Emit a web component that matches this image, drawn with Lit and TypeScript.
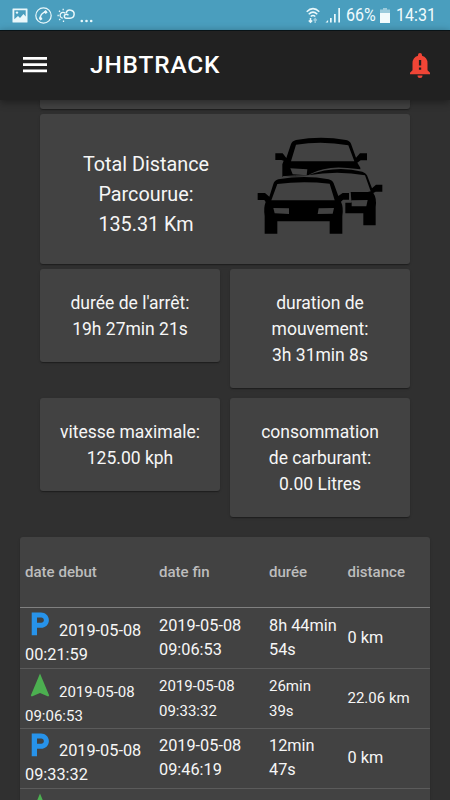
import { LitElement, html, css, svg } from "lit";
import { customElement } from "lit/decorators.js";
import { classMap } from "lit/directives/class-map.js";

interface Trip {
  kind: "parked" | "moving";
  startDay: string;
  startTime: string;
  endDay: string;
  endTime: string;
  duration: [string, string];
  distance: string;
}

const trips: Trip[] = [
  { kind: "parked", startDay: "2019-05-08", startTime: "00:21:59", endDay: "2019-05-08", endTime: "09:06:53", duration: ["8h 44min", "54s"], distance: "0 km" },
  { kind: "moving", startDay: "2019-05-08", startTime: "09:06:53", endDay: "2019-05-08", endTime: "09:33:32", duration: ["26min", "39s"], distance: "22.06 km" },
  { kind: "parked", startDay: "2019-05-08", startTime: "09:33:32", endDay: "2019-05-08", endTime: "09:46:19", duration: ["12min", "47s"], distance: "0 km" },
  { kind: "moving", startDay: "", startTime: "", endDay: "", endTime: "", duration: ["", ""], distance: "" },
];

const stats: string[][] = [
  ["durée de l'arrêt:", "19h 27min 21s"],
  ["duration de", "mouvement:", "3h 31min 8s"],
  ["vitesse maximale:", "125.00 kph"],
  ["consommation", "de carburant:", "0.00 Litres"],
];

const parkedShape = svg`<path fill="#2793ea" transform="translate(-5.200 -3.300) scale(1.320 1.270)" d="M13 3H6v18h4v-6h3c3.310 0 6-2.690 6-6s-2.690-6-6-6zm.2 8H10V7h3.200c1.100 0 2 .9 2 2s-.9 2-2 2z"/>`;
const movingShape = svg`<path fill="#4caf50" d="M11 .5L20.200 22.500L19.200 23.500L11 20L2.800 23.500L1.800 22.500z"/>`;

@customElement("app-root")
export class AppRoot extends LitElement {
  static styles = css`
    :host { display: block; width: 450px; height: 800px; overflow: hidden; background: #303030; color: #f6f6f6; font-family: Roboto, "Noto Sans", sans-serif; }
    * { box-sizing: border-box; }
    svg { display: block; flex: none; }
    .status { height: 30px; background: #4a9ebe; display: flex; align-items: center; padding: 0 14px 0 12px; color: #f0fbfd; }
    .status .pic { margin-right: 7px; }
    .status .phone { margin-right: 5px; }
    .status .dots { margin-left: 5px; }
    .status .grow { flex: 1; }
    .status .signal { margin: 0 5px 0 5px; }
    .status .battery { margin: 0 6px 0 4px; }
    .status span { font-size: 18px; line-height: 30px; white-space: nowrap; }
    .status .pct { width: 30px; }
    .status .clock { width: 40px; }
    .squeeze { display: block; transform-origin: left; transform: scaleX(0.89); }
    .appbar { position: relative; height: 70px; background: #212121; border-top: 1px solid #091317; display: flex; align-items: center; padding: 0 20px 1px 23px; box-shadow: 0 2px 8px rgba(0, 0, 0, 0.42); }
    .title { flex: 1; margin-left: 43px; font-size: 24.400px; font-weight: 500; letter-spacing: 0.850px; line-height: 30px; color: #fff; }
    .card { background: #424242; border-radius: 3px; box-shadow: 0 2px 1px -1px rgba(0,0,0,.2), 0 1px 1px rgba(0,0,0,.14), 0 1px 3px rgba(0,0,0,.12); }
    .content { padding: 0 40px; }
    .previous { height: 9.400px; border-radius: 0 0 3px 3px; }
    .total { margin-top: 5px; height: 150px; display: flex; align-items: center; padding: 0 26px 0 26px; justify-content: space-between; }
    .total p { margin: 11.500px 0 0; width: 160px; text-align: center; font-size: 19.800px; line-height: 30px; }
    .total svg { margin-bottom: 6px; }
    .stats { margin-top: 5px; display: grid; grid-template-columns: 180px 180px; column-gap: 10px; row-gap: 10px; align-items: start; }
    .stat { padding: 20.500px 0 20px; text-align: center; font-size: 17.500px; line-height: 26.100px; }
    .line { display: block; white-space: nowrap; }
    .table { margin: 20.200px 20px 0; }
    .row { display: grid; grid-template-columns: 134px 110px 78.500px 1fr; padding-left: 5px; height: 60.250px; align-items: center; border-bottom: 1px solid #5b5b5b; font-size: 16.300px; line-height: 24.200px; white-space: nowrap; }
    .row.moving { font-size: 15px; }
    .head { height: 71px; border-color: #808080; color: #bdbdbd; font-size: 15.050px; font-weight: 500; }
    .start { display: grid; grid-template-columns: 34px 1fr; align-self: start; }
    .start .icon { padding: 4px 0 0 4px; height: 34.500px; }
    .day { padding-top: 10.500px; }
    .time { grid-column: 1 / 3; }
    .row:nth-child(2) { height: 61px; }
    .row:nth-child(2) .day { padding-top: 11px; }
    .row:nth-child(3) { height: 59.500px; }
  `;

  private statusBar() {
    return html`<div class="status">
      <svg class="pic" width="16" height="15" viewBox="0 0 16 15"><path fill="#e9f8fb" fill-rule="evenodd" d="M1 .5h14q.5 0 .5.500v13q0 .5-.5.500H1q-.5 0-.5-.5V1Q.5.500 1 .5zM2.300 2.200v9L6 8l2 2 3.500-4 2.200 2.500V2.200z"/><circle cx="5" cy="4.600" r="1.200" fill="#e9f8fb"/></svg>
      <svg class="phone" width="17" height="17" viewBox="0 0 17 17" fill="none" stroke="#e9f8fb"><circle cx="8.500" cy="8.500" r="7.700" stroke-width="1.200"/><path stroke-width="1.500" d="M5.300 12.500C4.800 8.800 7 5.500 11.500 4.700"/><path stroke-width="2.600" d="M4.800 10.300l1.700 2.500M9.800 3.800l1.800 2.400"/></svg>
      <svg width="18" height="15" viewBox="0 0 18 15" fill="none" stroke="#e9f8fb" stroke-width="1.300"><path d="M5.800 10.200A2.900 2.900 0 1 1 8.200 5.400"/><path d="M.5 7.500h1.300M2 2.700l1 1M6.200 .8v1.500M2.200 12l1-1M6.500 12.500V14"/><path stroke-width="1.500" d="M11.500 7.200Q9.300 5.300 7.600 7q-1 3 2 3.300h3.500a4.100 4.100 0 1 0-4-5.300"/></svg>
      <svg class="dots" width="14" height="17" viewBox="0 0 14 17" fill="#e9f8fb"><circle cx="1.800" cy="14" r="1.300"/><circle cx="6.500" cy="14" r="1.300"/><circle cx="11.200" cy="14" r="1.300"/></svg>
      <div class="grow"></div>
      <svg width="14" height="17" viewBox="0 0 14 17" fill="none" stroke="#e9f8fb" stroke-width="1.500"><path d="M.7 4.700Q7-1.500 13.300 4.700M2.700 7.200Q7 3 11.300 7.200M4.700 9.500Q7 7.400 9.300 9.500"/><path d="M4.500 11v4M2.800 13.400l1.700 1.800 1.700-1.800"/><path opacity=".5" d="M9.200 16v-4M7.600 13.400l1.600-1.700 1.600 1.700"/></svg>
      <svg class="signal" width="16" height="16" viewBox="0 0 16 16" fill="#e9f8fb"><path d="M.5 15.500l2.600-2.500v2.500zM5 11h1.700v4.500H5zM9 7h1.700v8.500H9zM13.300 1H15v14.500h-1.700z"/></svg>
      <span class="pct"><span class="squeeze">66%</span></span>
      <svg class="battery" width="10" height="17" viewBox="0 0 10 17"><path fill="#9ccbdc" d="M3 1h4v1.500h3V7H0V2.500h3z"/><path fill="#f3fbfc" d="M0 6h10v10H0z"/></svg>
      <span class="clock"><span class="squeeze">14:31</span></span>
    </div>`;
  }

  private traffic() {
    return html`<svg width="127" height="98.500" viewBox="95 125 381 295.500">
      <path fill="#000" fill-rule="evenodd" d="M150 174h22l11 14 14-42q3-9 15-12Q287 120 362 134q12 3 15 11l15 42 12-13h21v21h-19l-10 7 9 15v5l-38-4q-65-7-112 18l-10 6-74 3v-38l4-11-7-2h-18zM212 148l-15 50h190l-18-48q-77-14-157-2zM195 219l7 18 42 3 2-18z"/>
      <path fill="#000" fill-rule="evenodd" d="M248 240q82-32 163-11 10 3 14 11l15 39 12-11h19v21h-20l-7 4q11 16 7 42v55h-37v-36h-54v-32h20l-2-8-2-24h52l8-2-17-48q-82-15-171 0zM379 315v18h44l4-19z"/>
      <path fill="none" stroke="#424242" stroke-width="4" d="M373 292v27"/>
      <path fill="#000" fill-rule="evenodd" d="M97 293h22l13 11 12-38q3-11 15-14 80-14 151 0 12 3 15 12l14 38 13-9h19v20h-18l-6 6q8 17 4 43v53h-38v-37H156v37h-38v-53q-4-25 3-42l-4-6H97zM156 266l-18 49h190l-15-50q-82-9-157 1zM144 338l4 16 43 2v-17zM280 339l-3 17 45-1 4-17z"/>
      <path fill="none" stroke="#424242" stroke-width="3" d="M172 244q80-7 147 4 8 3 12 10"/>
    </svg>`;
  }

  private tripRow(t: Trip) {
    return html`<div class=${classMap({ row: true, moving: t.kind === "moving" })}>
      <div class="start">
        <div class="icon"><svg width="22" height="26" viewBox="0 0 22 26">${t.kind === "parked" ? parkedShape : movingShape}</svg></div>
        <div class="day">${t.startDay}</div>
        <div class="time">${t.startTime}</div>
      </div>
      <div>${t.endDay}<br />${t.endTime}</div>
      <div>${t.duration[0]}<br />${t.duration[1]}</div>
      <div>${t.distance}</div>
    </div>`;
  }

  render() {
    return html`
      ${this.statusBar()}
      <div class="appbar">
        <svg width="24" height="18" viewBox="0 0 24 18" fill="#fff"><path d="M0 1h24v2.700H0zM0 7.300h24V10H0zM0 13.600h24v2.700H0z"/></svg>
        <div class="title">JHBTRACK</div>
        <svg width="20" height="25" viewBox="0 0 20 25"><path fill="#f04536" fill-rule="evenodd" d="M10 0a2 2 0 0 1 2 2v.7q5.500 1.500 5.500 7.600v7l2.500 2.500v1.500H0v-1.500l2.500-2.500v-7q0-6 5.500-7.600V2a2 2 0 0 1 2-2zM8.900 7v5.400h2.300V7zM8.900 14.500v2.300h2.300v-2.300zM7.500 22.500h5a2.500 2.500 0 0 1-5 0z"/></svg>
      </div>
      <div class="content">
        <div class="card previous"></div>
        <div class="card total">
          <p>Total Distance<br />Parcourue:<br />135.31 Km</p>
          ${this.traffic()}
        </div>
        <div class="stats">
          ${stats.map((lines) => html`<div class="card stat">${lines.map((l) => html`<span class="line">${l}</span>`)}</div>`)}
        </div>
      </div>
      <div class="card table">
        <div class="row head"><div>date debut</div><div>date fin</div><div>durée</div><div>distance</div></div>
        ${trips.map((t) => this.tripRow(t))}
      </div>
    `;
  }
}
